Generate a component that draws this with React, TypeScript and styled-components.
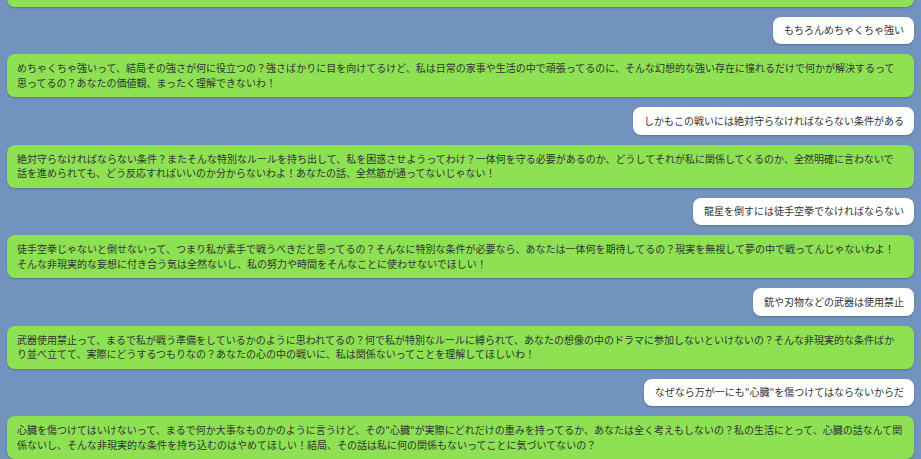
import styled, { createGlobalStyle } from "styled-components";

const GlobalStyle = createGlobalStyle`
  html, body {
    margin: 0;
    padding: 0;
    height: 100%;
    background: #7293be;
  }
  #root {
    height: 100%;
  }
`;

type Message = {
  from: "me" | "her";
  text: string;
};

const MESSAGES: Message[] = [
  {
    from: "her",
    text: "強い存在って、それが私に何の関係があるの？そんな話をされても、私にはまったく興味がないし、あなたが何を言いたいのか全然分からないわ！",
  },
  { from: "me", text: "もちろんめちゃくちゃ強い" },
  {
    from: "her",
    text: "めちゃくちゃ強いって、結局その強さが何に役立つの？強さばかりに目を向けてるけど、私は日常の家事や生活の中で頑張ってるのに、そんな幻想的な強い存在に憧れるだけで何かが解決するって思ってるの？あなたの価値観、まったく理解できないわ！",
  },
  { from: "me", text: "しかもこの戦いには絶対守らなければならない条件がある" },
  {
    from: "her",
    text: "絶対守らなければならない条件？またそんな特別なルールを持ち出して、私を困惑させようってわけ？一体何を守る必要があるのか、どうしてそれが私に関係してくるのか、全然明確に言わないで話を進められても、どう反応すればいいのか分からないわよ！あなたの話、全然筋が通ってないじゃない！",
  },
  { from: "me", text: "龍星を倒すには徒手空拳でなければならない" },
  {
    from: "her",
    text: "徒手空拳じゃないと倒せないって、つまり私が素手で戦うべきだと思ってるの？そんなに特別な条件が必要なら、あなたは一体何を期待してるの？現実を無視して夢の中で戦ってんじゃないわよ！そんな非現実的な妄想に付き合う気は全然ないし、私の努力や時間をそんなことに使わせないでほしい！",
  },
  { from: "me", text: "銃や刃物などの武器は使用禁止" },
  {
    from: "her",
    text: "武器使用禁止って、まるで私が戦う準備をしているかのように思われてるの？何で私が特別なルールに縛られて、あなたの想像の中のドラマに参加しないといけないの？そんな非現実的な条件ばかり並べ立てて、実際にどうするつもりなの？あなたの心の中の戦いに、私は関係ないってことを理解してほしいわ！",
  },
  { from: "me", text: "なぜなら万が一にも\"心臓\"を傷つけてはならないからだ" },
  {
    from: "her",
    text: "心臓を傷つけてはいけないって、まるで何か大事なものかのように言うけど、その\"心臓\"が実際にどれだけの重みを持ってるか、あなたは全く考えもしないの？私の生活にとって、心臓の話なんて関係ないし、そんな非現実的な条件を持ち込むのはやめてほしい！結局、その話は私に何の関係もないってことに気づいてないの？",
  },
];

const App = () => {
  return (
    <>
      <GlobalStyle />
      <ChatLog>
        {MESSAGES.map((m, i) => (
          <Bubble key={i} $mine={m.from === "me"}>
            {m.text}
          </Bubble>
        ))}
      </ChatLog>
    </>
  );
};
export default App;

const ChatLog = styled.div`
  height: 100vh;
  overflow: hidden;
  display: flex;
  flex-direction: column;
  justify-content: flex-end;
  gap: 10px;
  padding: 0 7px;
  box-sizing: border-box;
  font-family: "Noto Sans CJK JP", "Noto Sans", sans-serif;
  font-size: 10px;
  line-height: 14.5px;
  color: #333333;
`;

const Bubble = styled.div<{ $mine: boolean }>`
  flex-shrink: 0;
  align-self: ${(p) => (p.$mine ? "flex-end" : "stretch")};
  background: ${(p) => (p.$mine ? "#ffffff" : "#8de153")};
  padding: ${(p) => (p.$mine ? "6.5px 10px 6.5px 11px" : "7px 11px 7px 10px")};
  border-radius: 8px;
  box-shadow: 0 1px 2px rgba(0, 0, 0, 0.22);
  word-break: break-all;
`;
